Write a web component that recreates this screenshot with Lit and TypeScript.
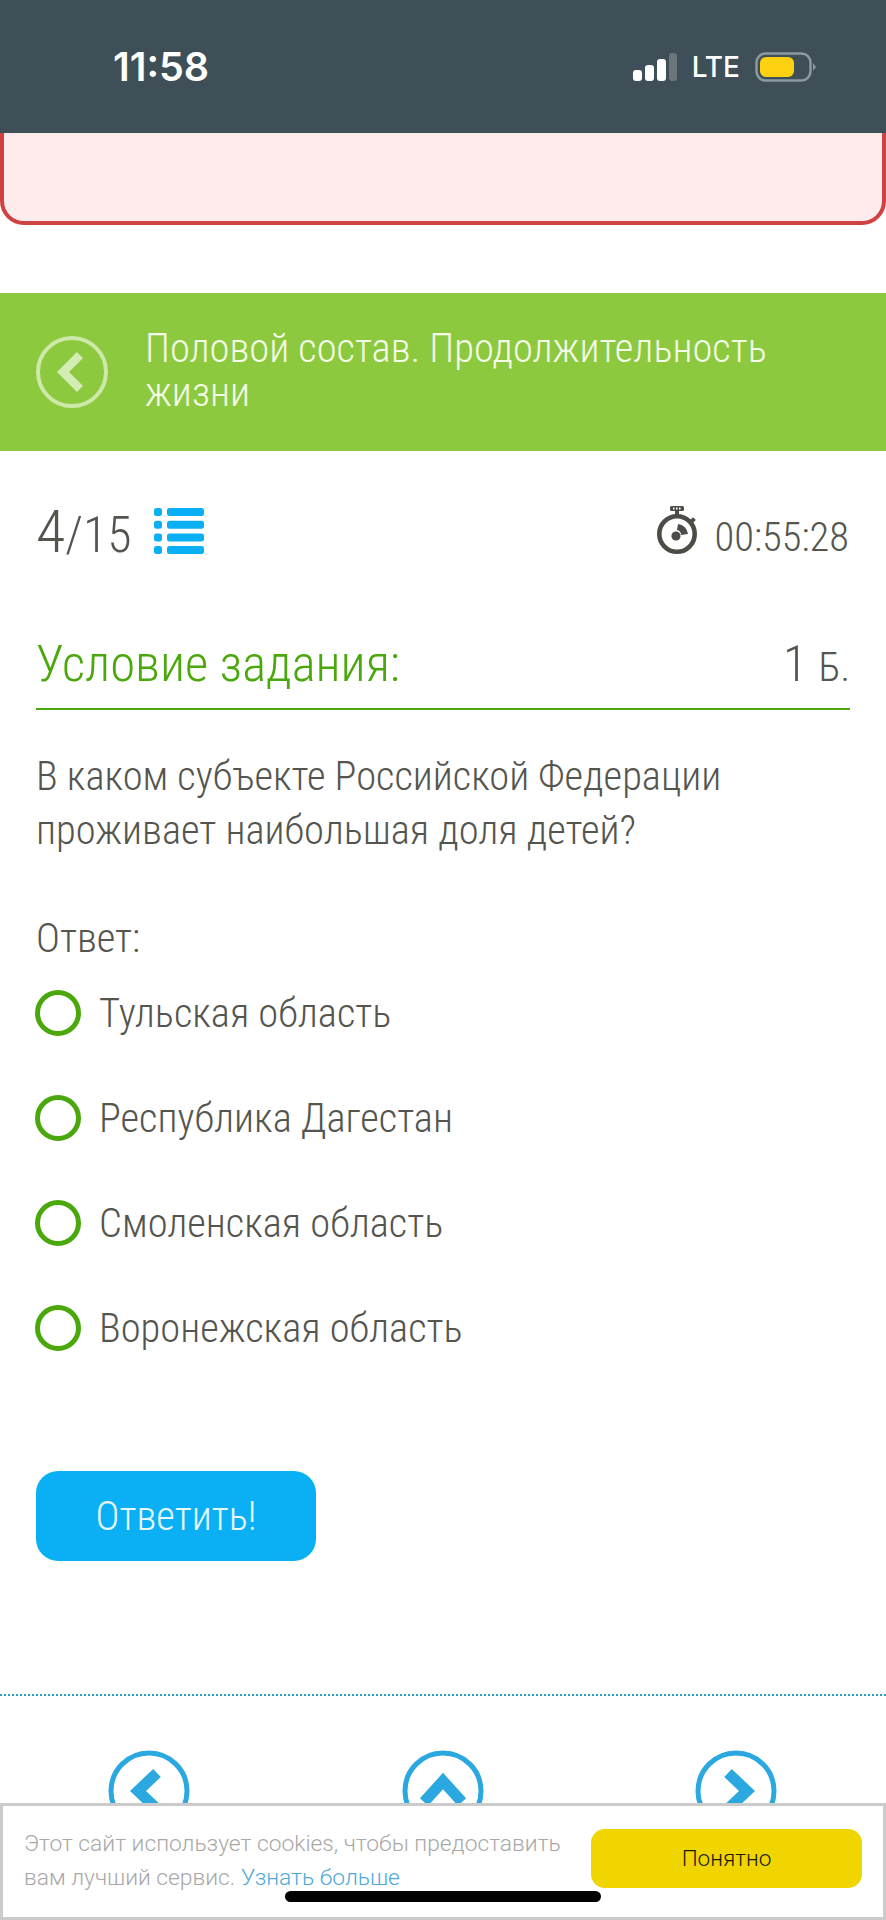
import { LitElement, html, css, svg } from "lit";
import { customElement } from "lit/decorators.js";

const OPTIONS = ["Тульская область", "Республика Дагестан", "Смоленская область", "Воронежская область"];

const chevron = (d: string) => html`<svg class="nav-btn" viewBox="0 0 84 84"><circle cx="42" cy="42" r="38" fill="none" stroke="#2ba8df" stroke-width="5"/><path d="${d}" fill="none" stroke="#2ba8df" stroke-width="11"/></svg>`;

@customElement("app-root")
export class AppRoot extends LitElement {
  static styles = css`
    :host { display: block; position: relative; width: 886px; height: 1920px; overflow: hidden; background: #fff; font-family: "Roboto", "Liberation Sans", sans-serif; font-weight: 300; font-stretch: 75%; color: #55554f; }
    .status { height: 133px; background: #3e4f57; display: flex; align-items: center; justify-content: space-between; padding: 0 69px 0 113px; box-sizing: border-box; color: #fff; }
    .time { font-family: "Inter", sans-serif; font-stretch: 100%; font-weight: 600; font-size: 39.5px; letter-spacing: 0; }
    .status-right { display: flex; align-items: center; gap: 15px; }
    .lte { font-family: "Inter", sans-serif; font-stretch: 100%; font-weight: 500; font-size: 28px; }
    .alert { height: 92px; box-sizing: border-box; background: #feecec; border: 4px solid #d04141; border-top: 0; border-radius: 0 0 24px 24px; }
    .bar { margin-top: 68px; height: 158px; background: #8cc93f; display: flex; align-items: center; gap: 37px; padding: 0 36px; box-sizing: border-box; color: #fff; }
    .bar-title { font-size: 40.5px; line-height: 44px; margin-top: -4px; color: #f4fbe9; width: 740px; }
    .meta { display: flex; justify-content: space-between; align-items: flex-end; height: 62px; margin: 47px 37px 0 36px; }
    .count { display: flex; align-items: flex-end; gap: 22px; }
    .count-num { font-size: 60px; line-height: 62px; margin-bottom: -6px; }
    .count-num small { font-size: 50px; }
    .count svg { margin-bottom: 6px; }
    .timer { display: flex; align-items: flex-end; gap: 15px; font-size: 40.5px; line-height: 46px; }
    .timer svg { margin-bottom: 6px; }
    .section { display: flex; justify-content: space-between; align-items: baseline; margin: 74px 36px 0; border-bottom: 2px solid #4aa80c; height: 76px; box-sizing: border-box; }
    .section h2 { margin: 0; font-size: 50.7px; font-weight: 300; color: #4aa80c; }
    .points { font-size: 50px; }
    .points small { font-size: 40px; }
    .question { margin: 39px 36px 0; font-size: 40.5px; line-height: 54px; }
    .answer-label { margin: 54px 36px 0; font-size: 40.5px; line-height: 54px; }
    .options { display: flex; flex-direction: column; gap: 51px; margin: 21px 36px 0 36px; }
    .option { display: flex; align-items: center; height: 54px; gap: 18px; font-size: 40.5px; }
    .radio { width: 46px; height: 46px; margin-left: -1px; box-sizing: border-box; border: 5px solid #4aa80c; border-radius: 50%; }
    .submit { display: flex; align-items: center; justify-content: center; width: 280px; height: 90px; margin: 116px 0 0 36px; border-radius: 22px; background: #0bb0f4; color: #e8f8ff; font-size: 40.5px; }
    .dots { margin-top: 133px; border-top: 2px dotted #2a9fc0; }
    .nav { display: flex; justify-content: space-between; padding: 53px 108px 0 107px; }
    .nav-btn { width: 84px; height: 84px; display: block; }
    .cookie { position: absolute; left: 0; right: 0; bottom: 0; height: 117px; box-sizing: border-box; border: 3px solid #cbcbcb; background: #fff; display: flex; justify-content: space-between; align-items: center; padding: 0 21px 0 21px; font-family: "Roboto", sans-serif; font-stretch: 100%; }
    .cookie-text { font-size: 22.8px; line-height: 34px; color: #a8a8a8; font-weight: 300; margin-top: -2px; white-space: nowrap; }
    .cookie-text a { color: #4fa8d8; text-decoration: none; }
    .cookie-btn { width: 271px; height: 59px; border-radius: 14px; background: #f0d500; color: #1a1a10; font-size: 22.6px; font-weight: 300; display: flex; align-items: center; justify-content: center; margin-top: -6px; }
    .home { position: absolute; left: 285px; top: 1891px; width: 316px; height: 11px; border-radius: 6px; background: #000; }
  `;

  render() {
    return html`
      <div class="status">
        <span class="time">11:58</span>
        <div class="status-right">
          <svg width="44" height="28" viewBox="0 0 44 28">
            <rect x="0" y="17" width="9" height="11" rx="3" fill="#fff"/>
            <rect x="12" y="12" width="9" height="16" rx="3" fill="#fff"/>
            <rect x="24" y="6" width="9" height="22" rx="3" fill="#fff"/>
            <rect x="36" y="0" width="8" height="28" rx="3" fill="#69777d"/>
          </svg>
          <span class="lte">LTE</span>
          <svg width="62" height="30" viewBox="0 0 62 30">
            <rect x="1.5" y="1.5" width="54" height="27" rx="9" fill="none" stroke="#8c9aa1" stroke-width="2.5"/>
            <rect x="5" y="5" width="34" height="20" rx="6" fill="#fdd10f"/>
            <path d="M58 11 L61 15 L58 19 Z" fill="#8c9aa1"/>
          </svg>
        </div>
      </div>
      <div class="alert"></div>
      <div class="bar">
        <svg width="72" height="72" viewBox="0 0 72 72" style="flex:none">
          <circle cx="36" cy="36" r="34" fill="none" stroke="#cde9a9" stroke-width="4"/>
          <path d="M44 19 L27 36 L44 53" fill="none" stroke="#d3ecb3" stroke-width="8.5"/>
        </svg>
        <div class="bar-title">Половой состав. Продолжительность жизни</div>
      </div>
      <div class="meta">
        <div class="count">
          <span class="count-num">4<small>/15</small></span>
          <svg width="50" height="46" viewBox="0 0 50 46">
            <g fill="#0bb0f4">
              ${[0, 12.7, 25.4, 38].map((y) => svg`<rect x="0" y="${y}" width="8" height="8" rx="2.5"/><rect x="13" y="${y}" width="37" height="8" rx="2.5"/>`)}
            </g>
          </svg>
        </div>
        <div class="timer">
          <svg width="42" height="48" viewBox="0 0 42 48">
            <rect x="13" y="0" width="14" height="5" rx="1.5" fill="#4d4d47"/>
            <rect x="16" y="1.5" width="1.5" height="2" fill="#fff"/><rect x="19" y="1.5" width="1.5" height="2" fill="#fff"/><rect x="22" y="1.5" width="1.5" height="2" fill="#fff"/>
            <rect x="18" y="5" width="4" height="5" fill="#4d4d47"/>
            <circle cx="20" cy="28" r="17.7" fill="none" stroke="#4d4d47" stroke-width="4.6"/>
            <circle cx="19" cy="30" r="4.6" fill="#4d4d47"/>
            <path d="M21 18 A11 11 0 0 1 31 28 L24 29 A5 5 0 0 0 20 24 Z" fill="#4d4d47"/>
            <rect x="34" y="12" width="4" height="4" fill="#4d4d47" transform="rotate(45 36 14)"/>
          </svg>
          <span>00:55:28</span>
        </div>
      </div>
      <div class="section">
        <h2>Условие задания:</h2>
        <span class="points">1 <small>Б.</small></span>
      </div>
      <div class="question">В каком субъекте Российской Федерации проживает наибольшая доля детей?</div>
      <div class="answer-label">Ответ:</div>
      <div class="options">
        ${OPTIONS.map((o) => html`<div class="option"><span class="radio"></span><span>${o}</span></div>`)}
      </div>
      <div class="submit">Ответить!</div>
      <div class="dots"></div>
      <div class="nav">
        ${chevron("M50 24 L31 42 L50 60")}
        ${chevron("M23 53 L42 32 L61 53")}
        ${chevron("M34 24 L53 42 L34 60")}
      </div>
      <div class="cookie">
        <div class="cookie-text">Этот сайт использует cookies, чтобы предоставить<br />вам лучший сервис. <a href="#">Узнать больше</a></div>
        <div class="cookie-btn">Понятно</div>
      </div>
      <div class="home"></div>
    `;
  }
}
